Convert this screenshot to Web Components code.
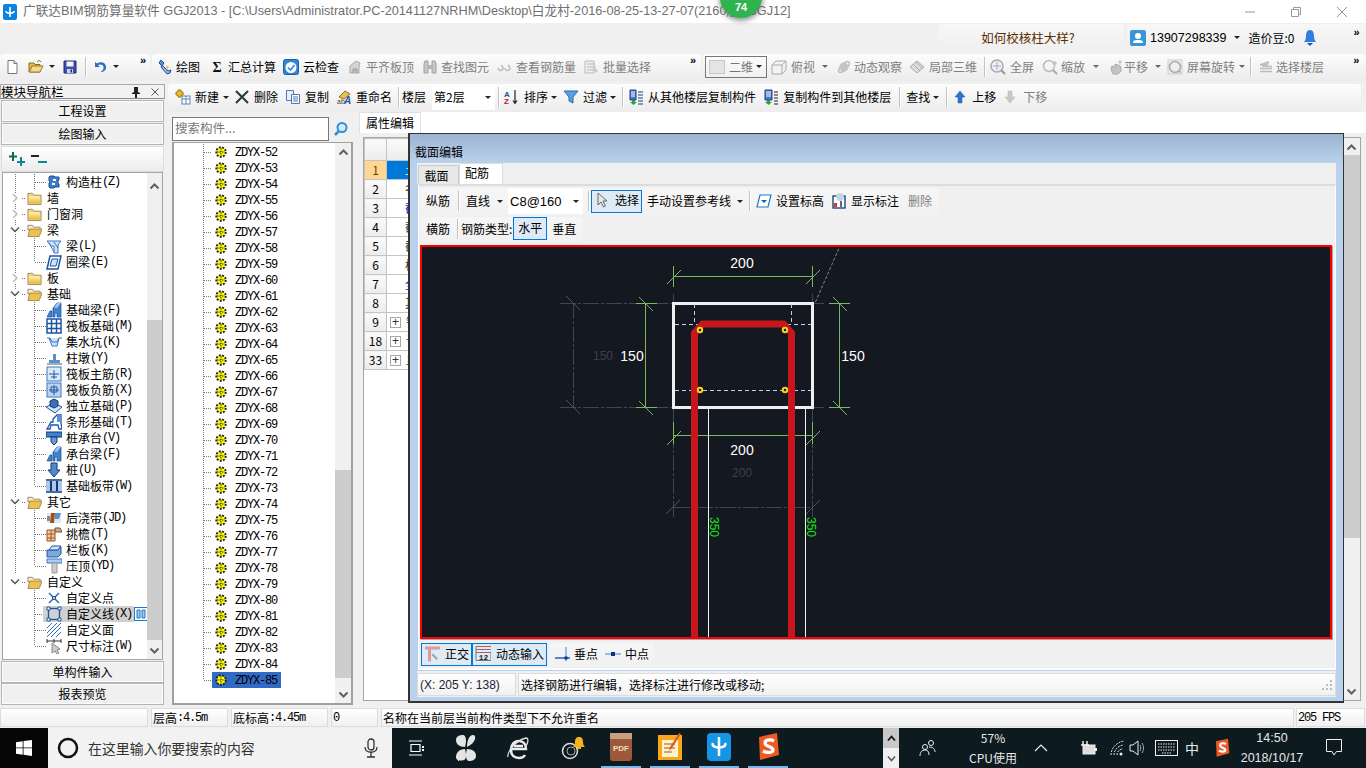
<!DOCTYPE html>
<html lang="zh"><head><meta charset="utf-8"><title>GGJ2013</title>
<style>
html,body{margin:0;padding:0;background:#f0f0f0}
app-shell{font:12px/16px "Noto Sans CJK SC","Liberation Sans",sans-serif;color:#000}
</style></head><body><app-shell></app-shell>
<script>
const ICONS={
new:'<path d="M4 1.500h6l3 3v10H4z" fill="#fff" stroke="#777"/><path d="M10 1.500v3h3" fill="#e8e8d8" stroke="#777"/>',
open:'<path d="M1 13V4h5l1 1.500h5V13z" fill="#e8b850" stroke="#8a6a20"/><path d="M1.500 13l2.500-6h11l-3 6z" fill="#f6d98a" stroke="#9a7a30"/><path d="M9 3c1.500-2 3.500-1.500 4 0" fill="none" stroke="#2a7a2a"/>',
save:'<path d="M2 2h12v12H2z" fill="#3f4fa8" stroke="#1e2a70"/><path d="M4.500 2.500h7v5h-7z" fill="#f2f2f2"/><path d="M5 10h6v4H5z" fill="#c9d3ec"/><path d="M8.500 10.500h1.500v3H8.500z" fill="#1e2a70"/>',
undo:'<path d="M3 3v5h5L6 6.200C8 5 11 5.500 11.500 8c.4 2-1 4-3 5 3.500 0 6-2 5.500-5.500C13.500 3.500 9 2 5 4.500z" fill="#2c6fc4"/>',
draw:'<path d="M4 1l3 3-2 3-3-3z" fill="#5b8fd0" stroke="#1f4f96"/><path d="M5 6l6 6 3-1-1 3-3 1-6-7z" fill="#8fb5e6" stroke="#1f4f96"/><path d="M9 6l3 2-2 3z" fill="#e8c040"/>',
sigma:'<text x="8" y="13" text-anchor="middle" font-size="14" font-weight="700" font-family="Liberation Serif" fill="#111">Σ</text>',
cloud:'<rect x="0.500" y="0.500" width="15" height="15" rx="2" fill="#2f86d8" stroke="#1a5fa8"/><circle cx="8" cy="8.500" r="5.500" fill="#fff"/><path d="M5 8.500l2.500 2.500 4-5" fill="none" stroke="#2f86d8" stroke-width="1.600"/>',
level:'<path d="M3 14V7l6-5 4 2-1 3v7z" fill="#d4d4d4" stroke="#a8a8a8"/><path d="M6 14v-4h4v4" fill="#bbb" stroke="#999"/>',
bino:'<path d="M2 14V5l1-3h3v12zM10 14V2h3l1 3v9z" fill="#c8c8c8" stroke="#a0a0a0"/><path d="M6 6h4v4H6z" fill="#b5b5b5"/>',
steel:'<path d="M2 9a2.500 2.500 0 1 0 5 0c0-1.500-1-2-2-3M9 9a2.500 2.500 0 1 0 5 0c0-1.500-1-2-2-3" fill="none" stroke="#bbb" stroke-width="1.500"/>',
batch:'<path d="M2 2h9v12H2z" fill="#eee" stroke="#bbb"/><path d="M4 5h8M4 8h9M4 11h9" stroke="#bbb"/><path d="M11 8l4 4-2 2-3-4z" fill="#ccc"/>',
cube:'<path d="M1 6l4-4h10v9l-4 4H1z" fill="#f2f2f2" stroke="#aaa"/><path d="M1 6h10v9M11 6l4-4" fill="none" stroke="#aaa"/>',
orbit:'<ellipse cx="8" cy="8" rx="7" ry="3" transform="rotate(-45 8 8)" fill="none" stroke="#bbb" stroke-width="1.500"/><circle cx="8" cy="8" r="4.500" fill="#c4c4c4"/>',
local:'<path d="M1 8l7-6 7 6-7 6z" fill="#ddd" stroke="#aaa"/><path d="M4 5l7 7M7 3l7 7" stroke="#aaa"/>',
full:'<circle cx="7" cy="7" r="6" fill="#eef" stroke="#aaa" stroke-width="1.500"/><path d="M7 3v8M3 7h8" stroke="#aaa"/><path d="M11 11l4 4" stroke="#999" stroke-width="2"/>',
zoom:'<circle cx="7" cy="7" r="5.500" fill="#f4f4f4" stroke="#bbb" stroke-width="1.500"/><path d="M11 11l4 4" stroke="#aaa" stroke-width="2"/><path d="M13 2v4M11 4h4" stroke="#bbb"/>',
pan:'<path d="M5 15l-2-5 1-3 3 1V5l3 1 3 2v4l-3 3z" fill="#c4c4c4" stroke="#aaa"/><path d="M12 1v5M10 3h4" stroke="#bbb"/>',
rotate:'<rect x="1" y="1" width="14" height="14" fill="#efefef" stroke="#ccc"/><circle cx="8" cy="8" r="5.500" fill="none" stroke="#aaa" stroke-width="1.500"/><path d="M11 13l3 1-1-3" fill="#aaa"/>',
layers:'<path d="M2 6l8-3v2l-6 2 10 .5M2 9.500h12M2 12.500h12" fill="none" stroke="#bbb" stroke-width="1.500"/>',
add:'<rect x="7" y="7" width="8" height="8" fill="#fff" stroke="#5b83b8"/><path d="M7 10h8M11 7v8" stroke="#5b83b8"/><path d="M3 1h3v2h2v3H6v2H3V6H1V3h2z" fill="#f0c020" stroke="#9a7a10"/>',
del:'<path d="M2 2l12 12M14 2L2 14" stroke="#333" stroke-width="2"/>',
copy:'<path d="M1.500 1.500h7v10h-7z" fill="#e8f0fa" stroke="#5178b0"/><path d="M6.500 5.500h8v9h-8z" fill="#fff" stroke="#5178b0"/><path d="M8 8h5M8 10h5M8 12h5" stroke="#5178b0"/>',
rename:'<path d="M3 8l6-6 5 3-6 5z" fill="#e8c050" stroke="#8a7020"/><text x="1" y="15" font-size="7" font-family="Liberation Sans" fill="#444">ab</text><text x="8" y="15" font-size="10" font-weight="700" font-style="italic" font-family="Liberation Sans" fill="#2a4fa0">A</text>',
sort:'<text x="1" y="7.500" font-size="8" font-weight="700" font-family="Liberation Sans" fill="#2a4fa0">A</text><text x="1" y="15" font-size="8" font-weight="700" font-family="Liberation Sans" fill="#b02020">Z</text><path d="M12 1v13M10 11.500l2 3 2-3" fill="none" stroke="#222" stroke-width="1.200"/>',
funnel:'<path d="M1 2h14L10 8v6l-4-2V8z" fill="#5aa0e0" stroke="#2a6ab0"/>',
fromfl:'<path d="M2 1h6v10H2z" fill="#4a74c8" stroke="#23408c"/><path d="M3 3h4M3 5h4M3 7h4" stroke="#fff"/><path d="M4 11h3v2h2l-3.500 3L2 13h2z" fill="#2aa040"/><path d="M10 3h5M10 6h5M10 9h5M10 12h5M10 15h5" stroke="#5c7ab0" stroke-width="1.500"/>',
tofl:'<path d="M2 1h7v10H2z" fill="#4a74c8" stroke="#23408c"/><path d="M3 3h5M3 5h5M3 7h5" stroke="#fff"/><path d="M4 11h3v2h2l-3.500 3L2 13h2z" fill="#2aa040"/><path d="M11 3h4M11 6h4M11 9h4M11 12h4M11 15h4" stroke="#666" stroke-width="1.500"/>',
up:'<path d="M8 2l5 6h-3v6H6V8H3z" fill="#2b78c8" stroke="#1a5aa0" stroke-width=".5"/>',
down:'<path d="M8 14l5-6h-3V2H6v6H3z" fill="#c8c8c8" stroke="#b4b4b4" stroke-width=".5"/>',
pointer:'<path d="M4 1v12l3-3 2.500 5 2-1-2.500-5h4z" fill="#e8e8e8" stroke="#666"/>',
elev:'<path d="M4 2h11l-3 12H1z" fill="#fff" stroke="#1f78c8" stroke-width="1.200"/><path d="M5 7h6l-3 3z" fill="#1f5fa8"/>',
mark:'<rect x="2" y="3" width="12" height="12" fill="#fff" stroke="#123a70" stroke-width="1.300"/><circle cx="9" cy="4" r="4" fill="#c8d4e4"/><path d="M3 10h3v4H3z" fill="#d43a20"/><path d="M10 8v6" stroke="#123a70" stroke-width="1.500"/>',
ortho:'<path d="M1 1h15v3H7v12H4V4H1z" fill="#dc9c9c"/><path d="M9 8l5 5-1.500 1.500-5-5z" fill="#9aa6b0"/>',
dyn:'<path d="M1 1h15M1 4h15M1 7h15" stroke="#a86060"/><path d="M1 1v14h15V7" fill="none" stroke="#777"/><text x="8.500" y="14" text-anchor="middle" font-size="8" font-weight="700" font-family="Liberation Mono" fill="#222">12</text>',
perp:'<path d="M1 12h15" stroke="#2a5fb0" stroke-width="1.500"/><path d="M12 1v14" stroke="#7eaadd" stroke-width="1.500"/><rect x="10.500" y="10.500" width="3" height="3" fill="#12308a"/>',
mid:'<path d="M0 8h16" stroke="#7eaadd" stroke-width="1.500"/><rect x="6" y="6" width="4" height="4" fill="#12308a"/>',
search:'<circle cx="9" cy="6.500" r="4.500" fill="#d7ecfa" stroke="#2f8fd8" stroke-width="2"/><path d="M5.500 10.500L2 14" stroke="#2f8fd8" stroke-width="2.500"/>',
pluses:'<path d="M5 1v9M1 5.500h8" stroke="#0c6a5a" stroke-width="2"/><path d="M13 6v9M9 11h8" stroke="#0c8a9a" stroke-width="2"/>',
minuses:'<path d="M1 5h8" stroke="#222" stroke-width="2"/><path d="M8 11h9" stroke="#0c8a9a" stroke-width="2"/>',
folder:'<path d="M1 3h5l1 2h8v10H1z" fill="#f5d77e" stroke="#9d8a5a"/><path d="M2 6h12v8H2z" fill="url(#fg)"/><defs><linearGradient id="fg" x2="0" y2="1"><stop offset="0" stop-color="#fff2bc"/><stop offset="1" stop-color="#eeb52f"/></linearGradient></defs>',
folderopen:'<path d="M1 3h5l1 2h7v3H1z" fill="#f9ecc3" stroke="#9d8a5a"/><path d="M1 15l2-8h13l-3 8z" fill="#efc04a" stroke="#9d8a5a"/>',
col:'<path d="M4 2h4l1 1h4v3l-1 1v2l1 1v3H9l-1 1H4l-1-1V9l1-1-1-1V3z" fill="#3d7cc9" stroke="#1b4f95"/><path d="M7 5h3v2H7zM6 9h3v2H6z" fill="#fff"/>',
beam:'<path d="M1 3h14l-3 4v8H8V8H5z" fill="#cfe2f6" stroke="#3a78c0"/><path d="M3 5l5 9M8 4l4 6" stroke="#3a78c0"/>',
ring:'<path d="M4 2h11l-3 13H1z" fill="#fff" stroke="#1e54a8" stroke-width="1.500"/><path d="M6 5h6l-2 7H4z" fill="#cfe2f6" stroke="#1e54a8"/>',
fbeam:'<path d="M1 15l3-6h2v6zM7 15V6l4-5h4v14h-4v-4H9v4z" fill="#3f82cf" stroke="#1b4f95" stroke-width=".7"/><path d="M11 1l-3 5h3l4-5z" fill="#9ec3ec"/>',
raft:'<rect x="1" y="1" width="14" height="14" fill="#fff" stroke="#1e54a8" stroke-width="1.500"/><path d="M5.500 1v14M10.500 1v14M1 5.500h14M1 10.500h14" stroke="#1e54a8" stroke-width="1.500"/>',
sump:'<path d="M1 4h3l2 4h5l2-4h3M3 4l3 8h5l2-8" fill="#cfe2f6" stroke="#3a78c0"/>',
pier:'<path d="M1 13h15v2H1z" fill="#aaa"/><path d="M3 10h11v3H3zM7 4h3v6H7z" fill="#5890d0"/>',
mainbar:'<rect x="1" y="1" width="14" height="14" fill="#dbe9f9" stroke="#3a78c0"/><path d="M3 8h10M8 4v9M5 11h6" stroke="#1e54a8"/>',
negbar:'<rect x="1" y="1" width="14" height="14" fill="#bcd3ee" stroke="#3a78c0"/><path d="M3 8h10M8 3v10M5 5h6v5H5z" fill="none" stroke="#1e54a8"/>',
indep:'<path d="M0 9l8-4 8 4-7 6z" fill="#cfe2f6" stroke="#1e54a8"/><path d="M4 3l4-2 4 2v5l-4 2-4-2z" fill="#3f6fb0" stroke="#123a70"/>',
strip:'<path d="M1 15l4-7h2v-3l4-4h4v8l1 6h-3l-1-4H5l-1 4z" fill="#fff" stroke="#1e54a8" stroke-width="1.300"/><path d="M11 1v7h4V1z" fill="#5890d0"/>',
cap:'<path d="M0 2h16v5H0z" fill="#3f82cf" stroke="#123a70"/><path d="M5 7h6v5l-3 3-3-3z" fill="#6a9ad4" stroke="#123a70"/>',
pile:'<path d="M5 1h6v7h3l-6 7-6-7h3z" fill="#4f8ad0" stroke="#123a70"/>',
band:'<path d="M0 2h16M0 14h16" stroke="#123a70" stroke-width="1.500"/><path d="M0 3h16v10H0z" fill="#a8c8ee"/><path d="M5 3v10M11 3v10" stroke="#123a70" stroke-width="2"/>',
pour:'<path d="M1 3h14v10H1z" fill="#dce8f6"/><path d="M5 3h4l-1 10H4z" fill="#a04f20"/><path d="M9 3h6l-2 6H9z" fill="#5f8ed0"/><path d="M1 6h3v5H1z" fill="#888"/>',
eave:'<path d="M1 4h8v11H1z" fill="#f5c9a0" stroke="#a05020"/><path d="M1 8h8M1 12h8M5 4v11" stroke="#a05020"/><path d="M9 2h5l2 4H9z" fill="#d8a880" stroke="#705030"/>',
rail:'<path d="M1 8h11l3-3v7l-3 3H1z" fill="#7fa9da" stroke="#1e54a8"/><path d="M3 8l3-4h9l-3 4z" fill="#cfe2f6" stroke="#1e54a8"/>',
cope:'<path d="M1 1h15v4H1z" fill="#a9cdf2" stroke="#3a78c0"/><path d="M6 5h5v10H6z" fill="#ccc" stroke="#999"/>',
cpoint:'<path d="M3 3l10 10M13 3L3 13" stroke="#2a6bc0" stroke-width="1.500"/><circle cx="8" cy="8" r="1.500" fill="#fff" stroke="#123a70"/>',
cline:'<rect x="2.500" y="2.500" width="11" height="11" fill="none" stroke="#1e54a8" stroke-width="1.300"/><path d="M1 1h3v3H1zM12 1h3v3h-3zM1 12h3v3H1zM12 12h3v3h-3z" fill="#fff" stroke="#1e54a8"/>',
cface:'<path d="M1 6l5-5M1 11L11 1M1 15L15 1M5 15L15 5M10 15l5-5" stroke="#2a6bc0"/>',
dimpt:'<path d="M1 3h14M1 1v4M15 1v4M8 1v4" stroke="#333"/><path d="M6 5v10l3-2 2 3 2-1-2-3 3-1z" fill="#ccc" stroke="#888"/>',
gear:'<circle cx="8" cy="8" r="4.500" fill="#ffff00"/><circle cx="8" cy="8" r="4.800" fill="none" stroke="#222" stroke-width="1.800" stroke-dasharray="2 1.300"/><path d="M8 4v8M4 8h8" stroke="#222" stroke-dasharray="1.500 1"/>'
};
const svg=(n,w=16,h=16,extra='')=>`<svg width="${w}" height="${h}" viewBox="0 0 16 16" style="flex:none;display:block;${extra}">${ICONS[n]||''}</svg>`;
const mono=s=>s.replace(/[\x00-\x7f]+/g,m=>`<span class="m">${m}</span>`);
const MONO='.m{font-family:"Liberation Mono",monospace;font-size:12px;letter-spacing:-1.2px}';
function def(name,css,html,init){
  customElements.define(name,class extends HTMLElement{
    connectedCallback(){
      if(this.shadowRoot)return;
      const r=this.attachShadow({mode:'open'});
      const h=typeof html==='function'?html(this):html;
      r.innerHTML=`<style>${css}</style>${h}`;
      if(init)init(this,r);
    }
  });
}
const a=(e,k,d)=>e.hasAttribute(k)?e.getAttribute(k):d;

def('tool-bar',`:host{display:flex;align-items:center;height:100%;flex:none;box-sizing:border-box;background:linear-gradient(#fdfdfd,#f3f3f3 55%,#ececec);border-radius:4px;padding-bottom:2px}`,`<slot></slot>`,
  e=>{if(e.hasAttribute('w'))e.style.width=a(e,'w')+'px';});
def('tool-btn',`:host{display:flex;align-items:center;flex:none;white-space:nowrap}
 :host([dim]){color:#7f7f7f}
 .ar{width:0;height:0;border:3px solid transparent;border-top:3.500px solid #222;border-bottom:0;margin:0 .5px}
 :host([dim]) .ar{border-top-color:#666}`,
 e=>`${e.hasAttribute('icon')?svg(a(e,'icon')):''}<span id="t" style="margin-left:${a(e,'tg',e.hasAttribute('icon')?4:0)}px"><slot></slot></span>${e.hasAttribute('ag')?`<i class="ar" style="margin-left:${+a(e,'ag')+.5}px"></i>`:''}`,
 e=>{e.style.marginLeft=a(e,'ml',0)+'px';});
def('tool-sep',`:host{display:block;flex:none;width:1px;height:20px;background:#c2c2c2;box-shadow:1px 0 #fff}`,``,e=>{e.style.marginLeft=a(e,'ml',0)+'px';});
def('tool-chev',`:host{display:block;flex:none;width:8px;align-self:flex-start;margin-top:0;font:700 11px/12px "Liberation Sans",sans-serif}`,`»`,e=>{e.style.marginLeft=a(e,'ml',0)+'px';});
def('tool-combo',`:host{display:flex;align-items:center;flex:none;box-sizing:border-box;justify-content:space-between;white-space:nowrap}
 :host([box]){border:1px solid #777;height:22px;background:linear-gradient(#fbfbfb,#f0f0f0)}
 i{width:0;height:0;border:3px solid transparent;border-top:3.500px solid #222;border-bottom:0;margin-right:4px}`,
 `<span style="display:flex;align-items:center"><slot></slot></span><i></i>`,
 e=>{e.style.marginLeft=a(e,'ml',0)+'px';e.style.width=a(e,'w')+'px';e.style.background=e.hasAttribute('box')?'':'#fff';e.style.height=e.hasAttribute('box')?'':'100%';});
def('sel-btn',`:host{display:flex;align-items:center;box-sizing:border-box;flex:none;height:23px;border:1px solid #0078d7;background:#deeaf6;justify-content:center;white-space:nowrap;padding-bottom:2px}`,`<slot></slot>`,
 e=>{e.style.marginLeft=a(e,'ml',0)+'px';e.style.width=a(e,'w')+'px';});

def('title-bar',`:host{display:flex;align-items:center;height:23px;background:#fff;color:#6f6f6f;position:relative;font:12.7px/23px "Liberation Sans","Noto Sans CJK SC",sans-serif;white-space:nowrap;flex:none}
 .i{margin:0 6px 0 3px}
 .t{flex:1;overflow:hidden}
 .w{display:flex;width:139px;color:#8a8a8a;flex:none}
 .w span{flex:none;width:46px;display:flex;justify-content:center;align-items:center}
 .ball{position:absolute;left:720px;top:-24px;width:42px;height:42px;border-radius:50%;background:#2fb34e;box-shadow:0 2px 5px 1px rgba(70,70,70,.55);color:#fff;font:700 11px/13px "Liberation Sans",sans-serif;text-align:center;box-sizing:border-box;padding-top:25px}`,
 `<svg class="i" width="14" height="16" viewBox="0 0 14 16"><rect width="14" height="16" rx="2" fill="#0a83e0"/><path d="M7 3v10M3 7c0 3 8 3 8 0" fill="none" stroke="#fff" stroke-width="1.600"/></svg>
 <span class="t">广联达BIM钢筋算量软件 GGJ2013 - [C:\\Users\\Administrator.PC-20141127NRHM\\Desktop\\白龙村-2016-08-25-13-27-07(2160版).GGJ12]</span>
 <span class="w"><span><svg width="12" height="12"><path d="M1 6h10" stroke="#999"/></svg></span><span><svg width="12" height="12"><path d="M1.500 3.500h7v7h-7zM3.500 3.500v-2h7v7h-2" fill="none" stroke="#999"/></svg></span><span><svg width="12" height="12"><path d="M1 1l10 10M11 1L1 11" stroke="#999"/></svg></span></span>
 <div class="ball">74</div>`);

def('top-band',`:host{display:flex;height:31px;background:#f0f0f0;flex:none;box-sizing:border-box;padding-top:1px}
 .hint{margin-left:938px;width:186px;height:27px;background:linear-gradient(#f7f7f7,#efefef);border-radius:3px;display:flex;align-items:center;justify-content:center;color:#5a2d00;font-size:12.500px;box-sizing:border-box;padding-right:6px}
 .u{margin-left:3px;width:239px;height:27px;display:flex;align-items:center;background:linear-gradient(#f7f7f7,#efefef);position:relative;border-radius:3px}
 .n{font:12.500px "Liberation Sans",sans-serif;margin-left:4px}
 i{width:0;height:0;border:3px solid transparent;border-top:3.500px solid #222;border-bottom:0;margin-left:8px}
 b{font:700 11px/12px "Liberation Sans",sans-serif;margin-left:36px;align-self:flex-start;margin-top:2px}`,
 `<div class="hint">如何校核柱大样?</div><div class="u"><svg width="16" height="16" viewBox="0 0 16 16" style="margin-left:3px"><rect width="16" height="16" rx="2" fill="#3a95d5"/><circle cx="8" cy="6" r="3" fill="#fff"/><path d="M3 13c0-3 2-3 5-3s5 0 5 3z" fill="#fff"/></svg><span class="n">13907298339</span><i></i><span style="margin-left:8px">造价豆:0</span><svg width="14" height="18" viewBox="0 0 14 18" style="margin-left:9px"><path d="M7 1c3 0 4 3 4 6s1 5 2 6H1c1-1 2-3 2-6s1-6 4-6z" fill="#2f7fe0"/><path d="M4 14h6l-3 3z" fill="#1a5ab0"/></svg><b>»</b></div>`);

def('tool-row',`:host{display:flex;height:27px;flex:none;gap:2px;margin-bottom:3px;background:#f0f0f0}`,`<slot></slot>`);

def('nav-btn',`:host{display:flex;align-items:center;justify-content:center;height:22px;margin:0 1px 1px 1px;box-sizing:border-box;border:1px solid #b5b5b5;background:#f0f0f0;font-size:12px;flex:none;box-shadow:inset 0 0 0 1px #fbfbfb;padding-bottom:1px}`,`<slot></slot>`);

def('tree-row',`:host{display:flex;align-items:center;height:16px;white-space:nowrap;flex:none;font-size:12px}
 .lead{display:flex;align-items:center;height:16px;flex:none;position:relative;background-repeat:no-repeat}
 .t{display:flex;align-items:center;height:16px;padding-right:2px}
 ${MONO}`,
 e=>{
  const lvl=+a(e,'lvl',1),st=a(e,'st',''),ic=a(e,'ic','');
  const dots='repeating-linear-gradient(#777 0 1px,transparent 1px 2px)';
  const hd='repeating-linear-gradient(90deg,#777 0 1px,transparent 1px 2px)';
  const bg=[],pos=[],size=[];
  if(e.hasAttribute('v1')){bg.push(dots);pos.push('12px 0');size.push('1px 16px');}
  if(lvl===2){
    bg.push(dots);pos.push('31px 0');size.push(e.hasAttribute('last')?'1px 8px':'1px 16px');
    bg.push(hd);pos.push('32px 8px');size.push('11px 1px');
  }else{bg.push(hd);pos.push('19px 8px');size.push('4px 1px');}
  const lead=`background-image:${bg.join(',')};background-position:${pos.join(',')};background-size:${size.join(',')};width:${lvl===2?63:44}px`;
  let chev='';
  if(lvl===1)chev=st==='open'?`<svg width="10" height="8" style="margin-left:7px;background:#fff;flex:none"><path d="M1 1.500l4 4 4-4" fill="none" stroke="#555" stroke-width="1.500"/></svg>`:`<svg width="8" height="10" style="margin-left:8px;background:#fff;flex:none"><path d="M2 1l4 4-4 4" fill="none" stroke="#bbb" stroke-width="1.500"/></svg>`;
  const ico=svg(lvl===1?(st==='open'?'folderopen':'folder'):ic,lvl===1?15:16,16,lvl===1?`margin-left:${st==='open'?7:8}px`:'margin-left:43px');
  const sel=e.hasAttribute('sel');
  return `<div class="lead" style="${lead}">${sel?'<span style="position:absolute;left:40px;right:0;top:0;bottom:0;background:#d0d0d0"></span>':''}<span style="position:relative;display:flex;align-items:center">${chev}${ico}</span></div><span class="t" style="${sel?'background:#d0d0d0':''}">${mono(a(e,'t'))}</span>${sel?`<svg width="13" height="14" viewBox="0 0 13 14" style="flex:none"><rect x=".5" y=".5" width="14" height="13" fill="#fff" stroke="#1f78c8"/><path d="M3 3h3v8H3zM8 3h3v8H8z" fill="#9ec8ee" stroke="#1f78c8"/></svg>`:''}`;
 });

def('scroll-bar',`:host{display:flex;flex-direction:column;align-items:center;flex:none;background:#f0f0f0;box-sizing:border-box}
 .b{height:17px;flex:none;display:flex;align-items:center;justify-content:center;width:100%}
 .th{background:#cdcdcd;width:100%;flex:none}
 .tr{flex:1;width:100%}`,
 e=>`<div class="b" style="height:${a(e,'bt',17)}px"><svg width="11" height="8"><path d="M1.500 6.500l4-4 4 4" fill="none" stroke="#606060" stroke-width="2"/></svg></div><div class="tr" style="flex:none;height:${a(e,'before')}px"></div><div class="th" style="height:${a(e,'thumb')}px"></div><div class="tr"></div><div class="b"><svg width="11" height="8"><path d="M1.500 1.500l4 4 4-4" fill="none" stroke="#606060" stroke-width="2"/></svg></div>`,
 e=>{e.style.width=a(e,'w',15)+'px';});

const TREE=[
 [2,'col','构造柱(Z)',1],[1,'c','墙',1],[1,'c','门窗洞',1],[1,'open','梁',1],[2,'beam','梁(L)',1],[2,'ring','圈梁(E)',1,1],[1,'c','板',1],[1,'open','基础',1],
 [2,'fbeam','基础梁(F)',1],[2,'raft','筏板基础(M)',1],[2,'sump','集水坑(K)',1],[2,'pier','柱墩(Y)',1],[2,'mainbar','筏板主筋(R)',1],[2,'negbar','筏板负筋(X)',1],[2,'indep','独立基础(P)',1],[2,'strip','条形基础(T)',1],[2,'cap','桩承台(V)',1],[2,'fbeam','承台梁(F)',1],[2,'pile','桩(U)',1],[2,'band','基础板带(W)',1,1],
 [1,'open','其它',1],[2,'pour','后浇带(JD)',1],[2,'eave','挑檐(T)',1],[2,'rail','栏板(K)',1],[2,'cope','压顶(YD)',1,1],[1,'open','自定义',0],
 [2,'cpoint','自定义点',0],[2,'cline','自定义线(X)',0,0,1],[2,'cface','自定义面',0],[2,'dimpt','尺寸标注(W)',0,1]];

def('nav-panel',`:host{display:flex;flex-direction:column;width:165px;flex:none;height:100%;background:#f0f0f0}
 .h{height:15px;box-sizing:border-box;border:1px solid #a8a8a8;border-bottom-color:#888;background:#f2f2f2;display:flex;align-items:center;font-size:12.500px;line-height:13px;flex:none;margin-bottom:1px;padding-right:3px}
 .h span{flex:1}
 .tools{height:26px;flex:none;margin:0 1px;background:linear-gradient(#fff,#ececec);display:flex;align-items:center;gap:4px;padding-left:5px;border:1px solid #ddd;box-sizing:border-box}
 .box{height:488px;box-sizing:border-box;margin:0 2px 1px;border:1px solid #a5a5a5;background:#fff;display:flex;flex:none;overflow:hidden}
 .rows{flex:1;min-width:0;padding-top:1px}`,
 ()=>`<div class="h"><span>模块导航栏</span><svg width="10" height="12" style="margin-right:10px"><path d="M3 1h4v5l2 1v1H6v4H4V8H1V7l2-1z" fill="#222"/></svg><svg width="8" height="8" style="margin-right:2px"><path d="M.5.500l7 7M7.500.500l-7 7" stroke="#555"/></svg></div>
 <nav-btn>工程设置</nav-btn><nav-btn>绘图输入</nav-btn>
 <div class="tools">${svg('pluses',18,16)}${svg('minuses',18,16)}</div>
 <div class="box"><div class="rows">${TREE.map(r=>`<tree-row lvl="${r[0]}" ${r[0]===1?`st="${r[1]==='open'?'open':'c'}"`:`ic="${r[1]}"`} t="${r[2]}" ${r[3]?'v1':''} ${r[4]?'last':''} ${r[5]?'sel':''}></tree-row>`).join('')}</div><scroll-bar before="122" thumb="320" bt="25"></scroll-bar></div>
 <nav-btn style="margin-bottom:0">单构件输入</nav-btn><nav-btn>报表预览</nav-btn>`);

def('comp-row',`:host{display:flex;align-items:center;height:16px;flex:none;white-space:nowrap;position:relative}
 .d{width:38px;height:16px;flex:none;background-image:repeating-linear-gradient(#777 0 1px,transparent 1px 2px),repeating-linear-gradient(90deg,#777 0 1px,transparent 1px 2px);background-repeat:no-repeat;background-position:29px 0,30px 8px;background-size:1px 16px,11px 1px}
 :host([last]) .d{background-size:1px 8px,11px 1px}
 .sel{display:flex;align-items:center;height:16px;width:69px;box-sizing:border-box;padding-left:1px}
 :host([last]) .sel{background:#316ac5}
 .n{margin-left:6px}
 ${MONO}`,
 e=>`<div class="d"></div><div class="sel">${svg('gear',16,16,'margin-left:0')}<span class="n">${mono(a(e,'t'))}</span></div>`);

def('comp-panel',`:host{display:flex;flex-direction:column;width:181px;margin-left:4px;flex:none;height:100%;background:#f0f0f0}
 .s{height:30px;flex:none;display:flex;align-items:flex-end;padding-bottom:1px;box-sizing:border-box}
 .in{width:157px;height:24px;box-sizing:border-box;border:1px solid #777;background:#fff;color:#777;display:flex;align-items:center;padding:0 0 3px 2px;font-size:12.500px}
 .l{height:563px;box-sizing:border-box;border:2px solid #a0a0a0;border-top-width:1px;background:#fff;display:flex;flex:none;overflow:hidden}
 .rows{flex:1;padding-top:1px;min-width:0}`,
 ()=>{let rows='';for(let i=52;i<=85;i++)rows+=`<comp-row t="ZDYX-${i}" ${i===85?'last':''}></comp-row>`;
  return `<div class="s"><div class="in">搜索构件...</div><svg width="16" height="16" viewBox="0 0 16 16" style="margin:0 0 4px 4px">${ICONS.search}</svg></div>
  <div class="l"><div class="rows">${rows}</div><scroll-bar before="310" thumb="208" w="16"></scroll-bar></div>`});

def('prop-panel',`:host{display:block;flex:none;width:1006px;margin-left:7px;height:100%;position:relative;background:#f0f0f0}
 .top{height:21px;display:flex;background:#fff}
 .tab{width:62px;text-align:center;line-height:20px;background:#fff;border:1px solid #e0e0e0;border-bottom:0;box-sizing:border-box;margin:0 0 0 -1px;font-size:12px;height:21px}
 .body{display:flex;height:568px;margin-left:3px;margin-right:5px;box-sizing:border-box;padding-top:4px;}
 .wrap{display:flex;flex:1;border:1px solid #a5a5a5;box-sizing:border-box;background:#fff;min-width:0}
 table{border-collapse:collapse;table-layout:fixed;width:122px;height:min-content}
 td{border:1px solid #c4c4c4;height:19px;padding:0;overflow:hidden;white-space:nowrap;font-size:12px;line-height:18px;box-sizing:border-box}
 td.a{width:22px;text-align:center;background:linear-gradient(#fafafa,#ececec)}
 td.b{width:100px;padding-left:18px}
 .tbl{flex:1;min-width:0}
 .p{display:inline-block;width:9px;height:9px;border:1px solid #a8a8a8;line-height:8px;font-size:12px;text-align:center;font-family:"Liberation Sans";margin:0 5px 0 -15px;vertical-align:1px}`,
 ()=>{const r=[['1','土','#fff'],['2','名'],['3','截','#0000e0'],['4','截'],['5','截'],['6','标'],['7','全','#0000e0'],['8','其'],['9','锚','#333',1],['18','计','#333',1],['33','显','#333',1]];
  return `<div class="top"><div class="tab">属性编辑</div></div><div class="body"><div class="wrap"><div class="tbl"><table><tr><td class="a" style="height:22px"></td><td style="width:100px;background:linear-gradient(#fafafa,#ececec)"></td></tr>${r.map((x,i)=>`<tr><td class="a" ${i===0?'style="background:#ffd793;color:#7a3a00"':''}>${x[0]}</td><td class="b" style="${i===0?'background:#0078d7;':''}color:${x[2]||'#333'}">${x[3]?'<span class="p">+</span>':''}${x[1]}</td></tr>`).join('')}</table></div><scroll-bar before="0" thumb="383" w="17"></scroll-bar></div></div><slot></slot>`});

def('cad-view',`:host{display:block;flex:none;box-sizing:border-box;border:2px solid #f00;height:394px;width:912px;background:#141820;box-shadow:1px 1px 0 #a5a5a5}
 svg{display:block} text{font-family:"Liberation Sans",sans-serif}`,
 `<svg width="908" height="390" viewBox="422 247 908 390">
 <g stroke="#41464e" fill="none" stroke-dasharray="16 2 3 2">
  <path d="M560 303.500h112M560 407.500h112M814 303.500h10M814 407.500h10"/>
  <path d="M573.500 303v104M673.500 409v110M812.500 409v110M673.500 294v9M812.500 294v9"/>
  <path d="M674 507.500h138"/>
 </g>
 <path d="M566 296l14 14M566 400l14 14M666 514l14-14M806 514l14-14" stroke="#50545a" fill="none"/>
 <path d="M815.500 302l24-55" stroke="#8a8a8a" fill="none" stroke-dasharray="3 2"/>
 <g stroke="#78b85f" fill="none">
  <path d="M673.500 276.500h139M673.500 266v21M812.500 266v21M667 284l14-14M806 284l14-14"/>
  <path d="M645.500 303v104M636 303.500h21M636 407.500h21M639 297l14 14M639 401l14 14"/>
  <path d="M839.500 303v104M829 303.500h21M829 407.500h21M833 297l14 14M833 401l14 14"/>
  <path d="M673.500 435.500h139M673.500 422v22M812.500 422v22M667 445l14-14M806 445l14-14"/>
 </g>
 <path d="M673.500 303.500h139v104h-139z" fill="none" stroke="#f0f0f0" stroke-width="3"/>
 <g stroke="#b8d4f4" fill="none" stroke-dasharray="4 3"><path d="M675 324.500h136M675 390.500h136M694.500 304v20M791.500 304v20"/></g>
 <path d="M708.500 409v228M805.500 409v228" stroke="#f2f2f2"/>
 <path d="M694.500 637V333l8-9h81l8 9v304" fill="none" stroke="#c8161d" stroke-width="7"/>
 <g fill="#141820" stroke="#ffd21a" stroke-width="2"><circle cx="700" cy="330" r="2.200"/><circle cx="785" cy="330" r="2.200"/><circle cx="700" cy="390" r="2.200"/><circle cx="785" cy="390" r="2.200"/></g>
 <g fill="#fff" font-size="14" text-anchor="middle"><text x="742" y="268">200</text><text x="632" y="361">150</text><text x="853" y="361">150</text><text x="742" y="455">200</text></g>
 <g fill="#3d4149" font-size="12" text-anchor="middle"><text x="603" y="360">150</text><text x="742" y="477">200</text></g>
 <g fill="#19e619" font-size="12" text-anchor="middle"><text transform="translate(710 527) rotate(90)">350</text><text transform="translate(807 527) rotate(90)">350</text></g>
 </svg>`);

def('dlg-row',`:host{display:flex;align-items:center;flex:none;box-sizing:border-box;background:linear-gradient(#f6f6f6,#f1f1f1);border-radius:3px;padding-bottom:2px}`,`<slot></slot>`,
 e=>{e.style.width=a(e,'w')+'px';e.style.height=a(e,'h')+'px';e.style.marginLeft=a(e,'ml',2)+'px';e.style.marginTop=a(e,'mt',0)+'px';});

def('section-dialog',`:host{position:absolute;left:48px;top:21px;width:936px;height:570px;box-sizing:border-box;border:1px solid #333;border-bottom-width:2px;border-left-width:2px;background:#b9d1ea;display:flex;flex-direction:column;overflow:hidden}
 .tt{height:29px;flex:none;background:linear-gradient(#9bb5d2,#b9d1ea);padding-left:5px;line-height:36px;font-size:12px}
 .tabs{height:21px;flex:none;display:flex;margin-left:7px;margin-right:7px;background:#f0f0f0;box-sizing:border-box;padding-left:1px}
 .tab{width:41px;height:19px;margin-top:2px;background:#e8e8e8;border:1px solid #ccc;box-sizing:border-box;text-align:center;line-height:20px;border-bottom:0;font-size:12px;padding-right:4px}
 .tab.on{width:44px;height:21px;margin-top:0;background:#fff;line-height:18px;border-color:#ddd;padding-right:8px}
 .pan{height:486px;flex:none;margin:0 7px 0 8px;background:#f0f0f0;border:1px solid #fff;border-top:2px solid #dcdcdc;border-bottom-width:2px;box-sizing:border-box;padding-top:2px;display:flex;flex-direction:column}
 .snap{height:27px;display:flex;align-items:center;flex:none;margin-left:2px;margin-top:2px}
 .st{height:26px;flex:none;display:flex;margin:1px 7px 0 7px;background:#f0f0f0;padding:2px 0 1px;gap:2px;box-sizing:border-box}
 .c{height:100%;border:1px solid #dcdcdc;background:linear-gradient(#fff,#f1f1f1);box-sizing:border-box;display:flex;align-items:center;padding-left:2px;white-space:nowrap}
 .lat{font:12px "Liberation Sans",sans-serif;color:#223}
 .cv{flex:none;margin:3px 0 0 1px}`,
 `<div class="tt">截面编辑</div>
 <div class="tabs"><div class="tab">截面</div><div class="tab on">配筋</div></div>
 <div class="pan">
  <dlg-row w="519" h="28" ml="1">
   <tool-btn ml="6">纵筋</tool-btn><tool-sep ml="8"></tool-sep><tool-btn ml="7" ag="6">直线</tool-btn>
   <tool-combo ml="5" w="75" style="height:22px;"><span style="font:13px 'Liberation Sans',sans-serif;margin-left:2px">C8@160</span></tool-combo>
   <tool-sep ml="5"></tool-sep><sel-btn ml="2" w="51">${svg('pointer',16,18)}<span style="margin-left:5px">选择</span></sel-btn>
   <tool-btn ml="5" ag="5">手动设置参考线</tool-btn><tool-sep ml="6"></tool-sep>
   <tool-btn ml="6" icon="elev">设置标高</tool-btn><tool-btn ml="7" icon="mark">显示标注</tool-btn><tool-btn ml="9" dim>删除</tool-btn>
  </dlg-row>
  <dlg-row w="163" h="25" ml="1" mt="1">
   <tool-btn ml="6">横筋</tool-btn><tool-sep ml="7"></tool-sep><tool-btn ml="3">钢筋类型:</tool-btn>
   <sel-btn ml="1" w="34">水平</sel-btn><tool-btn ml="5">垂直</tool-btn>
  </dlg-row>
  <div class="cv"><cad-view></cad-view></div>
  <div class="snap"><sel-btn w="51">${svg('ortho',16,17)}<span style="margin-left:5px">正交</span></sel-btn><sel-btn w="75">${svg('dyn',16,17)}<span style="margin-left:5px">动态输入</span></sel-btn>
   <dlg-row w="104" h="24" ml="3"><tool-btn ml="4" icon="perp">垂点</tool-btn><tool-btn ml="7" icon="mid">中点</tool-btn></dlg-row></div>
 </div>
 <div class="st"><div class="c lat" style="width:99px">(X: 205 Y: 138)</div><div class="c" style="flex:1;justify-content:space-between;padding-right:2px"><span>选择钢筋进行编辑，选择标注进行修改或移动;</span><svg width="12" height="12"><g fill="#bbb"><rect x="9" y="1" width="2" height="2"/><rect x="5" y="5" width="2" height="2"/><rect x="9" y="5" width="2" height="2"/><rect x="1" y="9" width="2" height="2"/><rect x="5" y="9" width="2" height="2"/><rect x="9" y="9" width="2" height="2"/></g></svg></div></div>`);

def('status-bar',`:host{display:flex;height:20px;flex:none;background:#f0f0f0;gap:3px;box-sizing:border-box;padding-bottom:1px;white-space:nowrap}
 div{height:100%;box-sizing:border-box;border:1px solid #dcdcdc;background:linear-gradient(#fff,#f0f0f0);display:flex;align-items:center;padding-left:1px;flex:none}
 ${MONO}`,
 ()=>`<div style="width:148px"></div><div style="width:77px">${mono('层高:4.5m')}</div><div style="width:97px">${mono('底标高:4.45m')}</div><div style="width:47px">${mono('0')}</div><div style="width:913px">名称在当前层当前构件类型下不允许重名</div><div style="width:69px;margin-left:-1px">${mono('205 FPS')}</div>`);

def('task-bar',`:host{display:flex;height:40px;flex:none;background:#0d1a1f;align-items:center;color:#e8e8e8;position:relative;overflow:hidden}
 .st{width:48px;height:40px;background:#060606;display:flex;align-items:center;justify-content:center;flex:none}
 .se{width:344px;height:40px;background:#f2f2f2;display:flex;align-items:center;color:#333;flex:none;font-size:14px}
 .se span{font-size:13.900px}
 .it{height:40px;display:flex;align-items:center;justify-content:center;flex:none;box-sizing:border-box}
 .run{width:40px;border-bottom:2px solid #76b9ed;margin-right:9px}
 .sw{width:16px;height:40px;display:flex;flex-direction:column;margin-left:86px;flex:none}
 .sw div{height:20px;display:flex;align-items:center;justify-content:center}
 .tr{flex:none;display:flex;align-items:center;justify-content:center}
 .cpu{text-align:center;line-height:20px;font-size:12px;width:70px}
 .time{flex-direction:column;width:90px;font:12.500px/20px "Liberation Sans",sans-serif}`,
 `<div class="st"><svg width="16" height="16" viewBox="0 0 16 16"><path d="M0 2.200l6.700-1v6.300H0zM7.500 1.100L16 0v7.500H7.500zM0 8.300h6.700v6.500L0 13.800zM7.500 8.300H16V16l-8.500-1.200z" fill="#fff"/></svg></div>
 <div class="se"><svg width="24" height="24" viewBox="0 0 24 24" style="margin-left:8px"><circle cx="12" cy="12" r="9" fill="none" stroke="#111" stroke-width="2.500"/></svg><span style="margin-left:8px;width:168px;overflow:visible;white-space:nowrap">在这里输入你要搜索的内容</span><svg width="14" height="20" viewBox="0 0 14 20" style="margin-left:108px"><rect x="4" y="1" width="6" height="11" rx="3" fill="none" stroke="#333" stroke-width="1.300"/><path d="M1 9c0 7 12 7 12 0M7 15v4M3 19h8" fill="none" stroke="#333" stroke-width="1.300"/></svg></div>
 <div class="it" style="width:48px"><svg width="16" height="16" viewBox="0 0 16 16"><path d="M1 1h13M1 15h13M3 4.500h9v7H3z" fill="none" stroke="#fff" stroke-width="1.200"/><path d="M14 6h2v2h-2zM14 9h2v2h-2z" fill="#fff"/></svg></div>
 <div class="it" style="width:52px"><svg width="22" height="28" viewBox="0 0 22 28"><path d="M10 13C4 13 1 10 1 6s4-5 7-5 4 6 2 12zM12 13c0-6 2-12 6-12s3 8-6 12zM10 15C4 15 1 19 1 23s5 4 8 3 2-7 1-11zM12 15c6 0 9 3 9 7s-4 5-7 5-4-6-2-12z" fill="#e4e4e4"/></svg></div>
 <div class="it" style="width:52px"><svg width="24" height="24" viewBox="0 0 24 24"><path d="M4 13h16c0-5-3-8-7-8-5 0-8 4-8 9s3 8 8 8c3 0 5-1 6-3M8 10h9" fill="none" stroke="#eee" stroke-width="2.500"/><path d="M2 21C1 17 8 5 20 2c3 0 2 5 0 8" fill="none" stroke="#ddd" stroke-width="1.300"/></svg></div>
 <div class="it" style="width:57px"><svg width="30" height="28" viewBox="0 0 30 28"><circle cx="12" cy="17" r="7.500" fill="none" stroke="#ddd" stroke-width="1.500"/><circle cx="13" cy="17" r="4" fill="none" stroke="#aaa"/><path d="M21 3c3 0 4 2 4 5s1 4 2 5H15c1-1 2-2 2-5s1-5 4-5z" fill="#f3b51d"/><rect x="19" y="13" width="4" height="2" fill="#f3b51d"/></svg></div>
 <div class="it run"><svg width="24" height="30" viewBox="0 0 24 30"><rect x="1" y="1" width="22" height="28" rx="3" fill="#a0583a"/><rect x="1" y="1" width="22" height="6" fill="#c8a080"/><text x="12" y="19" text-anchor="middle" font-size="8" font-weight="700" fill="#f0e0c0" font-family="Liberation Sans">PDF</text></svg></div>
 <div class="it run"><svg width="26" height="28" viewBox="0 0 26 28"><rect x="1" y="2" width="24" height="25" fill="#f5a81c"/><rect x="5" y="7" width="16" height="17" fill="#fdf2d0"/><path d="M7 11h11M7 15h11M7 19h8" stroke="#a05a10"/><path d="M24 1l-9 14-3 3 1-4 9-14z" fill="#e0582a"/></svg></div>
 <div class="it run"><svg width="24" height="30" viewBox="0 0 24 30"><rect y="1" width="24" height="28" rx="4" fill="#1694e6"/><path d="M12 5v19M6 11c-3 6 15 6 12 0" fill="none" stroke="#fff" stroke-width="2.500"/></svg></div>
 <div class="it run"><svg width="24" height="30" viewBox="0 0 24 30"><path d="M3 5l18-4 2 22-19 5z" fill="#ee5a23"/><path d="M18 9c-4-2-9-1-9 2 0 4 8 3 8 7 0 3-6 3-10 1" fill="none" stroke="#fff" stroke-width="3.200"/></svg></div>
 <div class="sw"><div style="background:#c8c8c8"><svg width="9" height="7"><path d="M1 5.500l3.500-4 3.500 4" fill="none" stroke="#111" stroke-width="1.800"/></svg></div><div style="background:#f0f0f0"><svg width="9" height="7"><path d="M1 1.500l3.500 4 3.500-4" fill="none" stroke="#555" stroke-width="1.500"/></svg></div></div>
 <div class="tr" style="margin-left:20px"><svg width="18" height="18" viewBox="0 0 18 18"><circle cx="6" cy="8" r="2.500" fill="none" stroke="#eee"/><circle cx="12" cy="4" r="2.500" fill="none" stroke="#eee"/><path d="M1 17c0-4 2-6 5-6s4 2 4 5M10 8c3 0 6 1 6 5" fill="none" stroke="#eee"/></svg></div>
 <div class="tr cpu" style="margin-left:21px">57%<br>CPU使用</div>
 <div class="tr" style="margin-left:6px"><svg width="14" height="8"><path d="M1 7l6-6 6 6" fill="none" stroke="#eee" stroke-width="1.200"/></svg></div>
 <div class="tr" style="margin-left:32px"><svg width="18" height="16" viewBox="0 0 18 16"><rect x="3" y="5" width="12" height="9" fill="#ddd" stroke="#eee"/><rect x="15" y="8" width="2" height="3" fill="#eee"/><path d="M3 1v4M7 1v4M1 5h8" stroke="#eee" stroke-width="1.500"/></svg></div>
 <div class="tr" style="margin-left:12px"><svg width="16" height="16" viewBox="0 0 16 16"><path d="M1 15C1 8 7 2 14 1M4 15c0-5 4-9 9-10M7 15c0-3 2-6 6-6" fill="none" stroke="#ddd" stroke-dasharray="2 1"/><circle cx="11" cy="14" r="1.500" fill="#eee"/></svg></div>
 <div class="tr" style="margin-left:3px"><svg width="16" height="16" viewBox="0 0 16 16"><path d="M1 5h3l5-4v14l-5-4H1z" fill="none" stroke="#eee"/><path d="M11 5c1 2 1 4 0 6M13 3c2 3 2 7 0 10" fill="none" stroke="#aaa"/></svg></div>
 <div class="tr" style="margin-left:10px"><svg width="23" height="17" viewBox="0 0 23 17"><rect x=".5" y=".5" width="22" height="15" fill="none" stroke="#eee"/><path d="M3 4h17M3 7h17M3 10h17M7 13h9" stroke="#eee" stroke-dasharray="1.500 1"/></svg></div>
 <div class="tr" style="margin-left:6px;font-size:14px;width:16px">中</div>
 <div class="tr" style="margin-left:14px"><svg width="16" height="20" viewBox="0 0 24 30"><path d="M3 5l18-4 2 22-19 5z" fill="#ee5a23"/><path d="M18 9c-4-2-9-1-9 2 0 4 8 3 8 7 0 3-6 3-10 1" fill="none" stroke="#fff" stroke-width="3.200"/></svg></div>
 <div class="tr time" style="margin-left:-3px"><span>14:50</span><span>2018/10/17</span></div>
 <div class="tr" style="margin-left:9px"><svg width="16" height="18" viewBox="0 0 16 18"><path d="M.5.500h15v12h-5L8 16l-2-3.500H.5z" fill="none" stroke="#eee"/></svg></div>`);

def('app-shell',`:host{display:flex;flex-direction:column;width:1366px;height:768px;overflow:hidden;background:#f0f0f0;position:relative}
 .main{display:flex;height:624px;flex:none}
 .rc{width:1198px;margin-left:3px;height:100%;display:flex;flex-direction:column;flex:none}
 .t2{height:28px;flex:none}
 .ct{display:flex;height:596px;flex:none}`,
 `<title-bar></title-bar><top-band></top-band>
 <tool-row>
  <tool-bar w="150">
   <tool-btn ml="4" icon="new" tg="0"></tool-btn><tool-btn ml="8" icon="open" tg="0" ag="4"></tool-btn><tool-btn ml="7" icon="save" tg="0"></tool-btn><tool-sep ml="7"></tool-sep><tool-btn ml="6" icon="undo" tg="0" ag="4"></tool-btn><tool-chev ml="21"></tool-chev>
  </tool-bar>
  <tool-bar w="549">
   <tool-btn ml="5" icon="draw" tg="3">绘图</tool-btn><tool-btn ml="9" icon="sigma" tg="3">汇总计算</tool-btn><tool-btn ml="7" icon="cloud">云检查</tool-btn>
   <tool-btn ml="8" icon="level" tg="3" dim>平齐板顶</tool-btn><tool-btn ml="8" icon="bino" tg="3" dim>查找图元</tool-btn><tool-btn ml="7" icon="steel" dim>查看钢筋量</tool-btn><tool-btn ml="7" icon="batch" dim>批量选择</tool-btn><tool-chev ml="39"></tool-chev>
  </tool-bar>
  <tool-bar w="663">
   <tool-combo box ml="2" w="62" style="color:#777"><svg width="16" height="16" style="margin:0 4px 0 3px"><rect x=".5" y="1.500" width="15" height="13" fill="#e4e4e4" stroke="#c8c8c8"/></svg>二维</tool-combo>
   <tool-btn ml="4" icon="cube" ag="6" dim>俯视</tool-btn><tool-btn ml="8" icon="orbit" tg="2" dim>动态观察</tool-btn><tool-btn ml="7" icon="local" dim>局部三维</tool-btn><tool-sep ml="7"></tool-sep>
   <tool-btn ml="5" icon="full" dim>全屏</tool-btn><tool-btn ml="8" icon="zoom" tg="3" ag="7" dim>缩放</tool-btn><tool-btn ml="9" icon="pan" tg="0" ag="6" dim>平移</tool-btn><tool-btn ml="6" icon="rotate" ag="3" dim>屏幕旋转</tool-btn><tool-sep ml="5"></tool-sep><tool-btn ml="7" icon="layers" tg="2" dim>选择楼层</tool-btn><tool-chev ml="29"></tool-chev>
  </tool-bar>
 </tool-row>
 <div class="main">
  <nav-panel></nav-panel>
  <div class="rc">
   <div class="t2"><tool-bar w="1193">
    <tool-btn ml="7" icon="add" ag="3">新建</tool-btn><tool-btn ml="5" icon="del">删除</tool-btn><tool-btn ml="7" icon="copy">复制</tool-btn><tool-btn ml="7" icon="rename">重命名</tool-btn><tool-sep ml="6"></tool-sep><tool-btn ml="3">楼层</tool-btn>
    <tool-combo ml="6" w="63"><span style="margin-left:2px">第2层</span></tool-combo><tool-sep ml="3"></tool-sep>
    <tool-btn ml="4" icon="sort" tg="5" ag="2">排序</tool-btn><tool-btn ml="6" icon="funnel" ag="2">过滤</tool-btn><tool-sep ml="6"></tool-sep>
    <tool-btn ml="5" icon="fromfl">从其他楼层复制构件</tool-btn><tool-btn ml="7" icon="tofl">复制构件到其他楼层</tool-btn><tool-sep ml="8"></tool-sep><tool-btn ml="6" ag="2">查找</tool-btn><tool-sep ml="7"></tool-sep>
    <tool-btn ml="5" icon="up">上移</tool-btn><tool-btn ml="6" icon="down" tg="5" dim>下移</tool-btn>
   </tool-bar></div>
   <div class="ct"><comp-panel></comp-panel><prop-panel><section-dialog></section-dialog></prop-panel></div>
  </div>
 </div>
 <status-bar></status-bar><task-bar></task-bar>`);
</script></body></html>
